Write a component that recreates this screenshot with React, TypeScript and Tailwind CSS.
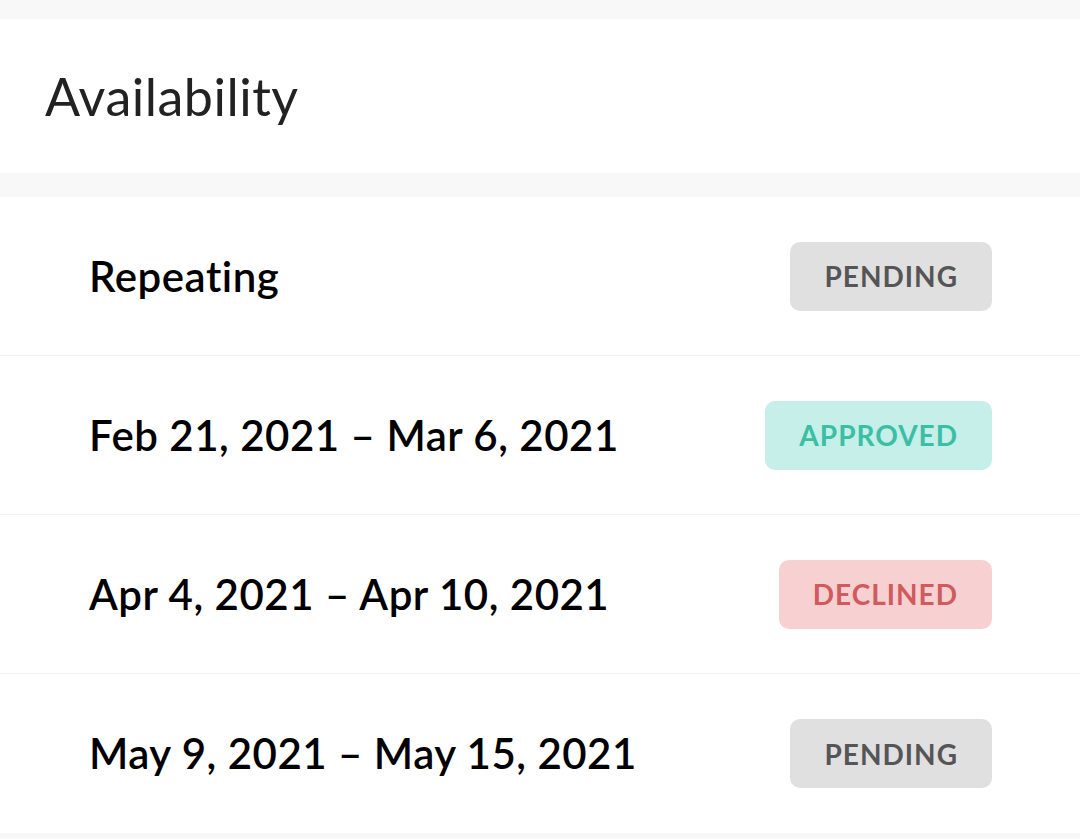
const rows = [
  { label: 'Repeating', status: 'PENDING' },
  { label: 'Feb 21, 2021 – Mar 6, 2021', status: 'APPROVED' },
  { label: 'Apr 4, 2021 – Apr 10, 2021', status: 'DECLINED' },
  { label: 'May 9, 2021 – May 15, 2021', status: 'PENDING' },
];

const badgeStyles: Record<string, string> = {
  PENDING: 'bg-[#e0e0e0] text-[#555555]',
  APPROVED: 'bg-[#c5efe8] text-[#3bbfa4]',
  DECLINED: 'bg-[#f7d1d2] text-[#d05a5c]',
};

export default function App() {
  return (
    <div className="min-h-[839px] bg-[#f8f8f8] pt-[19px] font-['Lato',sans-serif]">
      <div className="flex h-[154px] items-center bg-white px-[45px]">
        <h1 className="text-[52px] font-normal tracking-[0.5px] text-[#222222]">Availability</h1>
      </div>
      <div className="mt-[24px] bg-white">
        {rows.map((row, i) => (
          <div
            key={i}
            className={`flex h-[159px] items-center justify-between pl-[89px] pr-[88px] ${
              i < rows.length - 1 ? 'border-b border-[#f3f3f3]' : ''
            }`}
          >
            <span className="text-[42px] font-semibold tracking-[0.5px] text-black">{row.label}</span>
            <span
              className={`flex h-[69px] items-center rounded-[10px] px-[34px] text-[28px] font-bold tracking-[1px] ${badgeStyles[row.status]}`}
            >
              {row.status}
            </span>
          </div>
        ))}
      </div>
    </div>
  );
}
